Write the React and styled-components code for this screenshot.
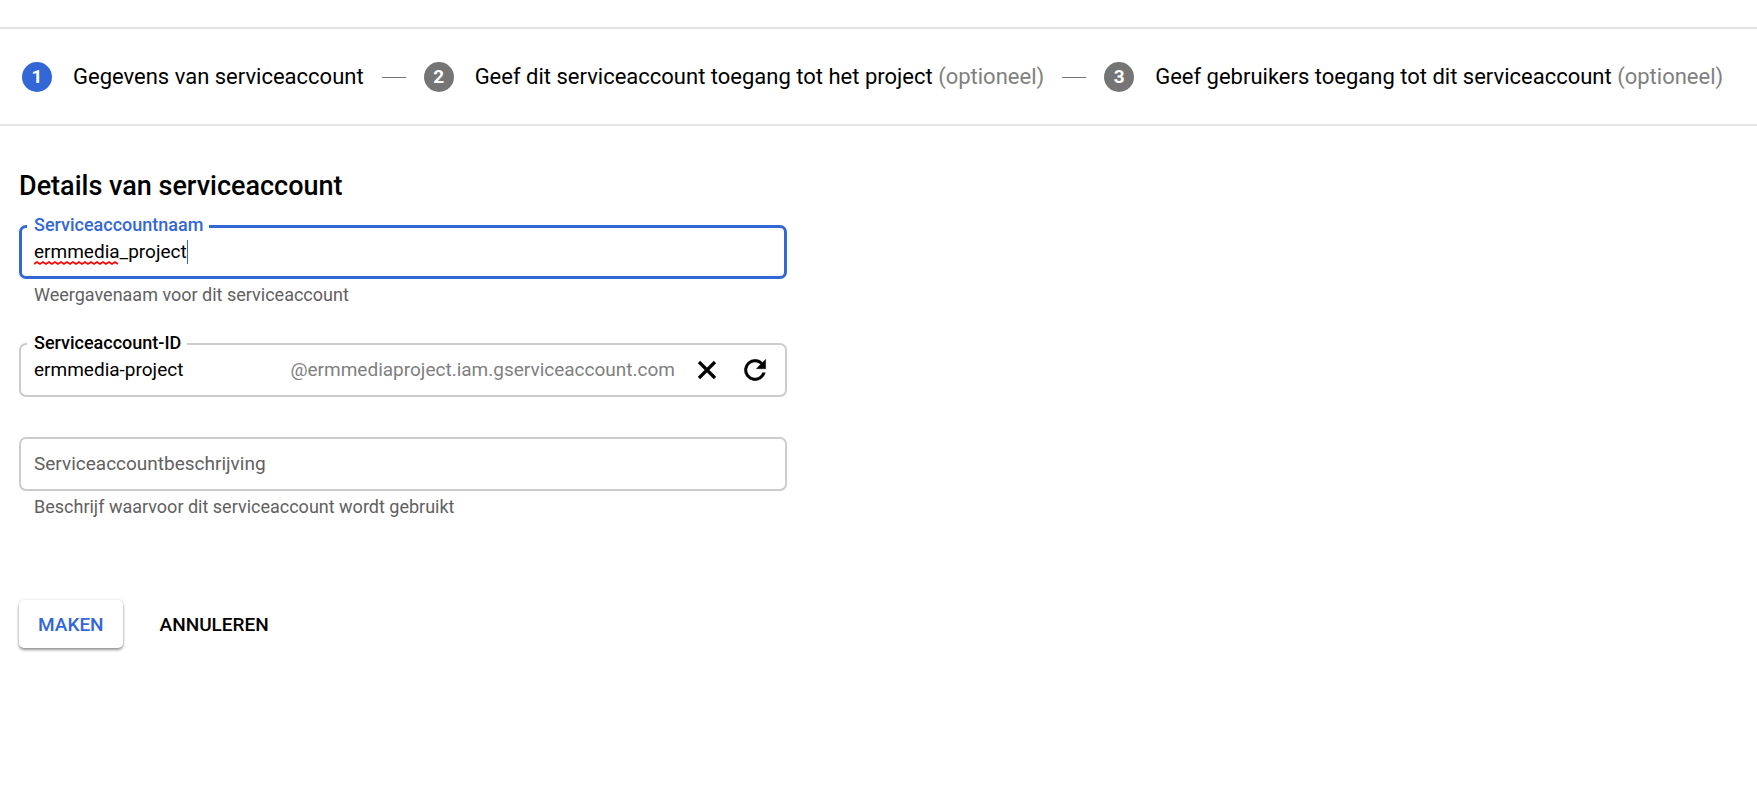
import React, { Component } from 'react';
import styled, { createGlobalStyle } from 'styled-components';

const GlobalStyle = createGlobalStyle`
    body {
        margin: 0;
        background: white;
        font-family: Roboto, 'Liberation Sans', sans-serif;
        color: black;
    }

    * {
        box-sizing: border-box;
    }
`

let Stepper = styled.ol`
    display: flex;
    align-items: center;
    gap: 18px;
    margin: 27px 0 0 0;
    padding: 33px 20px 32px 22px;
    list-style: none;
    border-top: 2px solid #e4e4e4;
    border-bottom: 2px solid #e4e4e4;
    white-space: nowrap;
`

let Step = styled.li`
    display: flex;
    align-items: center;
    font-size: 22px;
    line-height: 30px;
`

let StepNumber = styled.span`
    width: 30px;
    height: 30px;
    margin-right: 21px;
    border-radius: 50%;
    background: ${props => props.$active ? "#3367d6" : "#757575"};
    color: white;
    font-size: 19px;
    font-weight: 700;
    text-align: center;
`

let StepLine = styled.li`
    width: 24px;
    height: 1px;
    background: #757575;
`

let Optional = styled.span`
    color: #808080;
    white-space: pre;
`

let Form = styled.form`
    max-width: 806px;
    padding: 42px 19px;
`

let Title = styled.h1`
    margin: 0;
    font-size: 27px;
    font-weight: 500;
    line-height: 36px;
`

let Field = styled.div`
    position: relative;
    margin-top: ${props => props.$gap}px;
`

let FieldBox = styled.div`
    display: flex;
    align-items: center;
    height: 54px;
    padding: 0 14px 0 ${props => props.$active ? 12 : 13}px;
    border: ${props => props.$active ? "3px solid #3367d6" : "2px solid #cccccc"};
    border-radius: 7px;
`

let Label = styled.label`
    position: absolute;
    top: -12px;
    left: 8px;
    padding: 0 6px 0 7px;
    background: white;
    color: ${props => props.$active ? "#3367d6" : "black"};
    font-size: 18px;
    font-weight: 500;
    line-height: 24px;
`

let TextInput = styled.input`
    flex: 1;
    min-width: 0;
    padding: 0;
    border: none;
    outline: none;
    background: none;
    color: black;
    font-family: inherit;
    font-size: 19px;
    line-height: 24px;

    &::placeholder {
        color: #616161;
        opacity: 1;
    }
`

let Suffix = styled.span`
    color: #808080;
    font-size: 19px;
    line-height: 24px;
`

let Squiggle = styled.svg`
    position: absolute;
    top: 35px;
    left: 15px;
`

let Caret = styled.span`
    position: absolute;
    top: 15px;
    left: 168px;
    width: 1px;
    height: 24px;
    background: #3367d6;
`

let Hint = styled.div`
    padding: 4px 15px 0;
    color: #616161;
    font-size: 18px;
    line-height: 24px;
`

let IconButton = styled.button`
    display: flex;
    margin-left: 16px;
    padding: 0;
    border: none;
    background: none;
    cursor: pointer;
`

let Actions = styled.div`
    display: flex;
    gap: 18px;
    margin-top: 81px;
`

let Button = styled.button`
    height: 48px;
    padding: 0 19px;
    border: none;
    border-radius: 5px;
    background: white;
    color: ${props => props.$primary ? "#3367d6" : "black"};
    box-shadow: ${props => props.$primary ? "0 2px 3px rgba(0, 0, 0, 0.4), 0 0 3px rgba(0, 0, 0, 0.12)" : "none"};
    font-family: inherit;
    font-size: 19px;
    font-weight: 500;
    cursor: pointer;
`

const steps = [
    { title: "Gegevens van serviceaccount" },
    { title: "Geef dit serviceaccount toegang tot het project", optional: true },
    { title: "Geef gebruikers toegang tot dit serviceaccount", optional: true }
]

// zigzag under the misspelled word, 3px per half wave
const squigglePoints = Array.from({ length: 29 }, (_, i) => `${i * 3},${i % 2 ? 2 : 4}`).join(" ");

class App extends Component {
    state = {
        name: "ermmedia_project",
        id: "ermmedia-project",
        description: ""
    }

    onChangeField = (e) => {
        this.setState({ [e.target.name]: e.target.value });
    }

    onClickClear = () => {
        this.setState({ id: "" });
    }

    onClickRefresh = () => {
        this.setState({ id: this.state.name.replace(/_/g, "-") });
    }

    renderSteps = () => {
        return steps.map((s, i) => (
            <React.Fragment key={s.title}>
                {i > 0 && <StepLine aria-hidden="true" />}
                <Step>
                    <StepNumber $active={i === 0}>{i + 1}</StepNumber>
                    {s.title}
                    {s.optional && <Optional> (optioneel)</Optional>}
                </Step>
            </React.Fragment>
        ));
    }

    render() {
        return (
            <React.Fragment>
                <GlobalStyle />
                <Stepper>{this.renderSteps()}</Stepper>
                <Form onSubmit={e => e.preventDefault()}>
                    <Title>Details van serviceaccount</Title>
                    <Field $gap={21}>
                        <FieldBox $active>
                            <TextInput id="name" name="name" value={this.state.name} onChange={this.onChangeField} />
                        </FieldBox>
                        <Label htmlFor="name" $active>Serviceaccountnaam</Label>
                        <Squiggle width="84" height="6" viewBox="0 0 84 6" aria-hidden="true">
                            <polyline points={squigglePoints} fill="none" stroke="#ff0000" strokeWidth="1.6" />
                        </Squiggle>
                        <Caret />
                        <Hint>Weergavenaam voor dit serviceaccount</Hint>
                    </Field>
                    <Field $gap={36}>
                        <FieldBox>
                            <TextInput id="id" name="id" value={this.state.id} onChange={this.onChangeField} />
                            <Suffix>@ermmediaproject.iam.gserviceaccount.com</Suffix>
                            <IconButton type="button" aria-label="Wissen" onClick={this.onClickClear}>
                                <svg width="32" height="32" viewBox="0 0 32 32">
                                    <path d="M8 8 24 24M24 8 8 24" stroke="black" strokeWidth="3.2" />
                                </svg>
                            </IconButton>
                            <IconButton type="button" aria-label="Vernieuwen" onClick={this.onClickRefresh}>
                                <svg width="32" height="32" viewBox="0 0 24 24">
                                    <path stroke="black" strokeWidth="0.3" d="M17.65 6.35A7.96 7.96 0 0 0 12 4a8 8 0 1 0 7.73 10h-2.08A6 6 0 1 1 12 6c1.66 0 3.14.69 4.22 1.78L13 11h7V4z" />
                                </svg>
                            </IconButton>
                        </FieldBox>
                        <Label htmlFor="id">Serviceaccount-ID</Label>
                    </Field>
                    <Field $gap={40}>
                        <FieldBox>
                            <TextInput name="description" aria-label="Serviceaccountbeschrijving" placeholder="Serviceaccountbeschrijving" value={this.state.description} onChange={this.onChangeField} />
                        </FieldBox>
                        <Hint>Beschrijf waarvoor dit serviceaccount wordt gebruikt</Hint>
                    </Field>
                    <Actions>
                        <Button type="submit" $primary>MAKEN</Button>
                        <Button type="button">ANNULEREN</Button>
                    </Actions>
                </Form>
            </React.Fragment>
        );
    }
}

export default App;
